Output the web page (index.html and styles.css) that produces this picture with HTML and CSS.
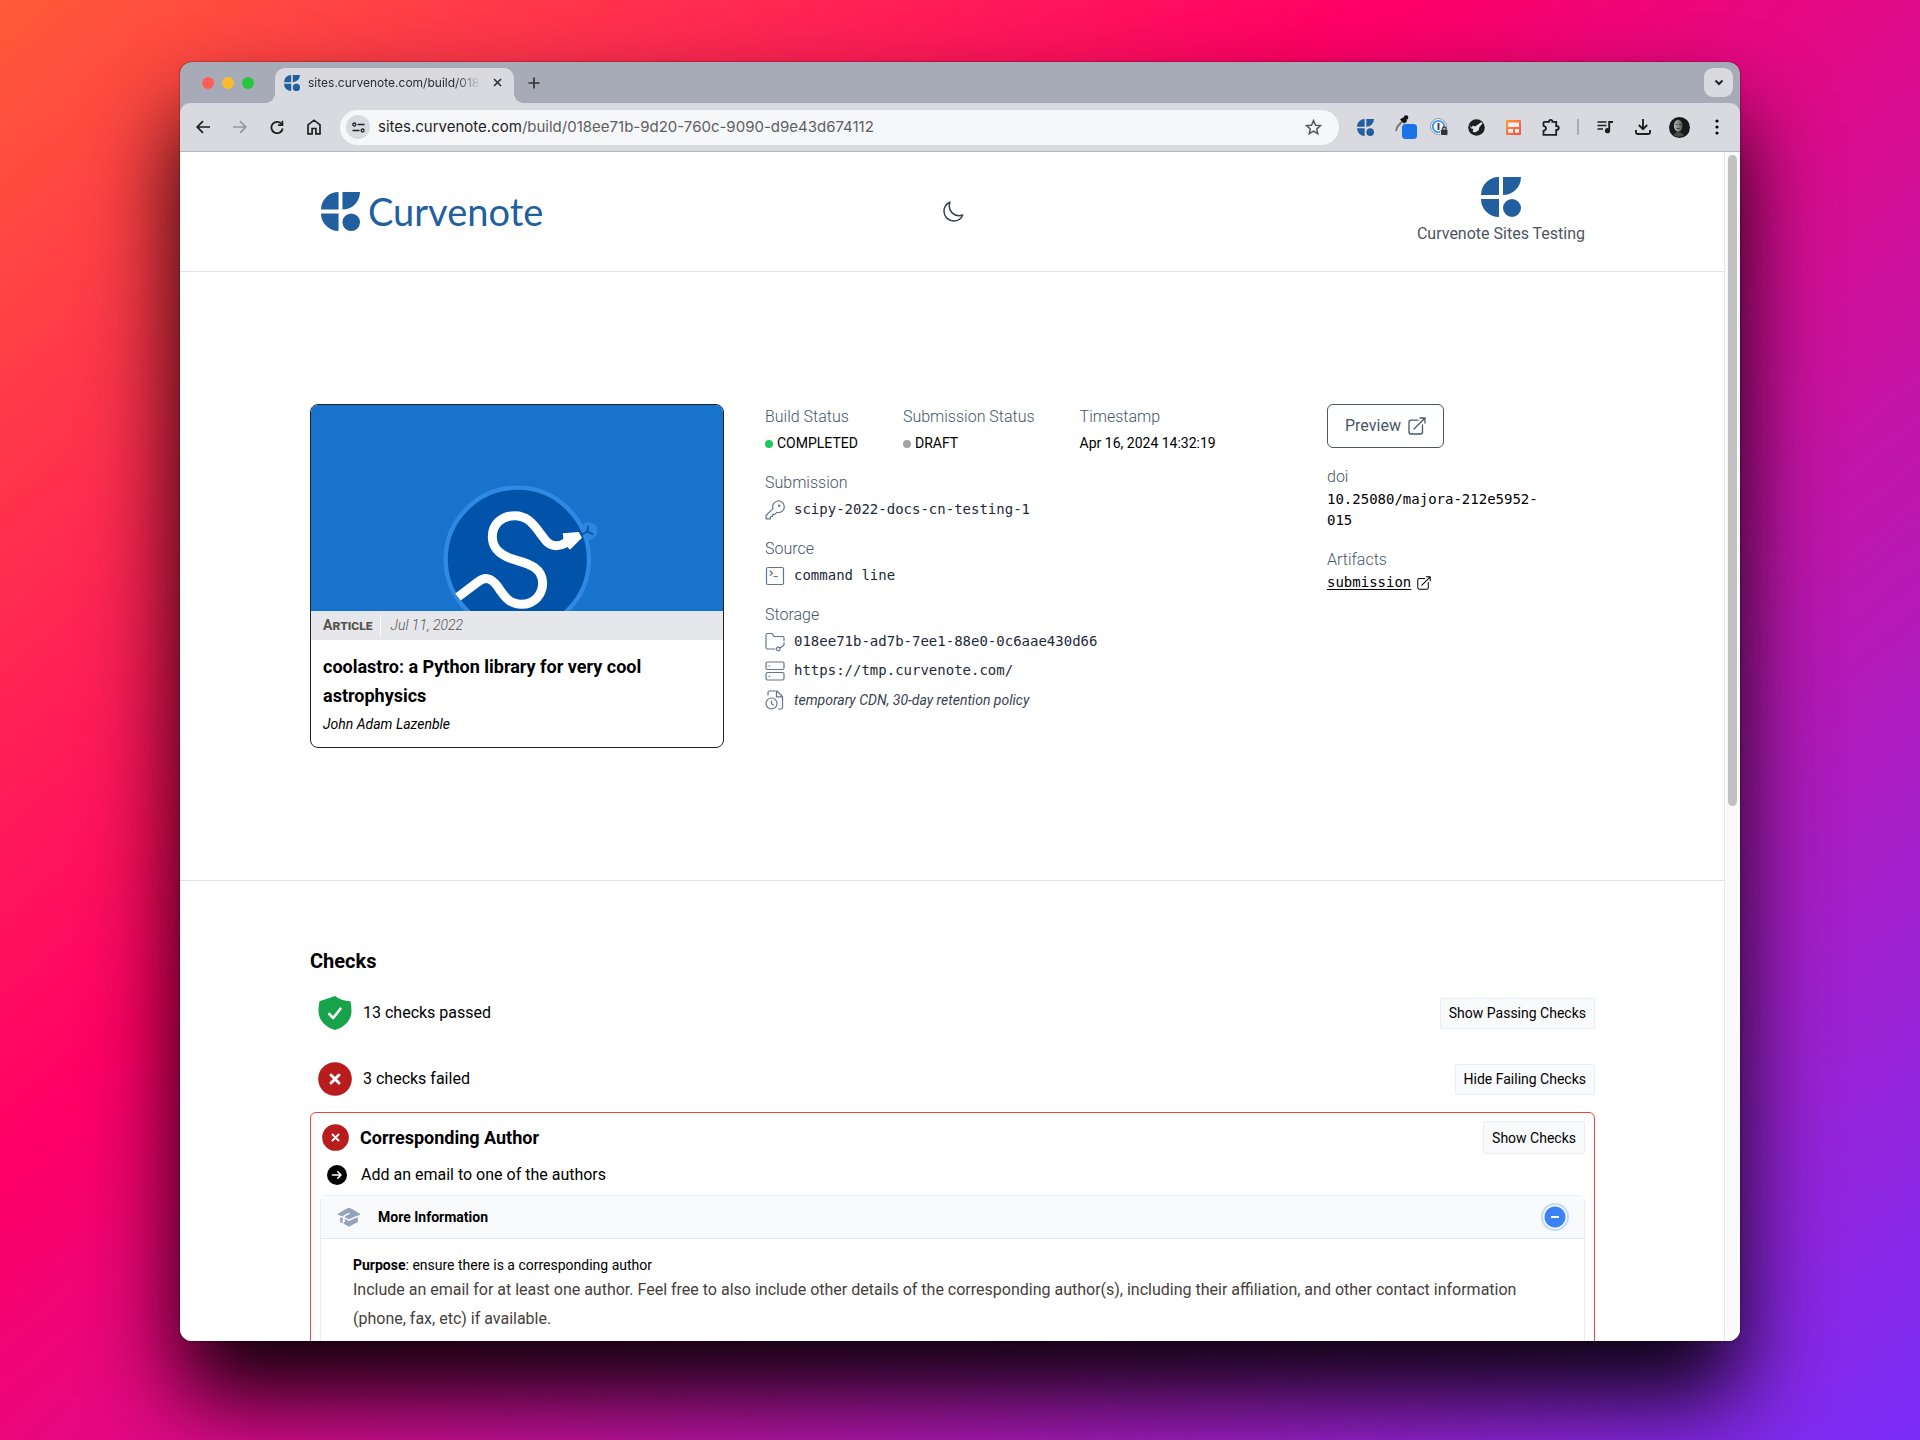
FILE: index.html
```html
<!DOCTYPE html>
<html lang="en">
<head>
<meta charset="utf-8">
<meta name="viewport" content="width=device-width, initial-scale=1">
<title>Curvenote build</title>
<link rel="stylesheet" href="styles.css">
</head>
<body>
<svg class="defs" aria-hidden="true">
  <symbol id="mark" viewBox="0 0 40 40">
    <path fill="currentColor" d="M18 0V18H0A18 18 0 0 1 18 0ZM22 0H40A18 18 0 0 1 22 18ZM0 22H18V40A18 18 0 0 1 0 22Z"/>
    <circle fill="currentColor" cx="31" cy="31" r="9"/>
  </symbol>
  <symbol id="external" viewBox="0 0 18 18">
    <path fill="none" stroke="currentColor" stroke-width="1.3" stroke-linecap="round" stroke-linejoin="round" d="M10 3.2H3A2 2 0 0 0 1 5.200V15A2 2 0 0 0 3 17H12.500A2 2 0 0 0 14.500 15V8M6 12 17 1M12 1H17V6"/>
  </symbol>
</svg>
<div class="window">
  <header class="tabs">
    <div class="lights"><span class="light close"></span><span class="light min"></span><span class="light max"></span></div>
    <div class="tab">
      <svg class="favicon"><use href="#mark"/></svg>
      <span class="tab-title">sites.curvenote.com/build/018</span>
      <button class="bare" aria-label="Close tab"><svg width="9" height="9" viewBox="0 0 9 9"><path d="M1 1 8 8M8 1 1 8" stroke="#333" stroke-width="1.700"/></svg></button>
    </div>
    <button class="bare new-tab" aria-label="New tab"><svg width="12" height="12" viewBox="0 0 12 12"><path d="M6 .5V11.500M.5 6H11.500" stroke="#333" stroke-width="1.700"/></svg></button>
    <button class="tab-search" aria-label="Search tabs"><svg width="10" height="7" viewBox="0 0 10 7"><path d="M1.500 1.500 5 5 8.500 1.500" fill="none" stroke="#222" stroke-width="2"/></svg></button>
  </header>
  <nav class="toolbar" aria-label="Browser">
    <button class="tool" aria-label="Back"><svg width="14" height="14" viewBox="0 0 14 14"><path d="M14 7H1.500M7 1.200 1.200 7 7 12.800" fill="none" stroke="#1f1f1f" stroke-width="1.700"/></svg></button>
    <button class="tool" aria-label="Forward"><svg width="14" height="14" viewBox="0 0 14 14"><path d="M0 7H12.500M7 1.200 12.800 7 7 12.800" fill="none" stroke="#96979c" stroke-width="1.700"/></svg></button>
    <button class="tool" aria-label="Reload"><svg width="14" height="14" viewBox="0 0 14 14"><path d="M12 4.600A5.700 5.700 0 1 0 12.700 8.500" fill="none" stroke="#1f1f1f" stroke-width="1.800"/><path d="M13.300.8V6H8.100V4.300H11.600V.8Z" fill="#1f1f1f"/></svg></button>
    <button class="tool" aria-label="Home"><svg width="14" height="16" viewBox="0 0 14 16"><path d="M1 5.800 7 1.200 13 5.800V14.800H8.900V9.500H5.100V14.800H1Z" fill="none" stroke="#1f1f1f" stroke-width="1.700"/></svg></button>
    <div class="address">
      <button class="tune" aria-label="Site information"><svg width="13" height="11" viewBox="0 0 13 11"><path d="M5.500 2.500H12.500M.5 8.500H7.500" stroke="#222" stroke-width="1.600"/><circle cx="2.300" cy="2.500" r="1.500" fill="none" stroke="#222" stroke-width="1.300"/><circle cx="10.600" cy="8.500" r="1.500" fill="none" stroke="#222" stroke-width="1.300"/></svg></button>
      <span class="url">sites.curvenote.com<span class="path">/build/018ee71b-9d20-760c-9090-d9e43d674112</span></span>
      <button class="bare" aria-label="Bookmark"><svg width="17" height="16" viewBox="0 0 17 16"><path d="M8.500 1.600 10.500 6.200 15.400 6.600 11.700 9.900 12.800 14.700 8.500 12.200 4.200 14.700 5.300 9.900 1.600 6.600 6.500 6.200Z" fill="none" stroke="#55565a" stroke-width="1.500"/></svg></button>
    </div>
    <button class="tool blue" aria-label="Curvenote"><svg width="17" height="17"><use href="#mark"/></svg></button>
    <button class="tool" aria-label="Colour picker"><svg width="28" height="24" viewBox="-6 0 28 24"><path d="M1 16 2.500 11.500 8 5.500" fill="none" stroke="#6b7f6b" stroke-width="2"/><path d="M5 4.500 8 2.500 12 5 11.500 7 9 8.500Z" fill="#111"/><circle cx="11" cy="2.500" r="2.300" fill="#111"/><rect x="7" y="9" width="15" height="15" rx="3.500" fill="#1a73e8"/></svg></button>
    <button class="tool" aria-label="Passwords"><svg width="19" height="18" viewBox="0 0 19 18"><circle cx="8.500" cy="8.500" r="8" fill="#f4f6f8" stroke="#7f848c" stroke-width=".8"/><circle cx="8.500" cy="8.500" r="5.700" fill="none" stroke="#3b94f5" stroke-width="1.800"/><path d="M8.500 5V12" stroke="#445" stroke-width="2"/><rect x="10.500" y="11" width="7.500" height="6.500" rx="1.500" fill="#333" stroke="#d9dae0"/><path d="M12.500 11.500V10.200A1.800 1.800 0 0 1 16 10.200V11.500" fill="none" stroke="#333" stroke-width="1.200"/></svg></button>
    <button class="tool" aria-label="Privacy"><svg width="17" height="17" viewBox="0 0 17 17"><circle cx="8.500" cy="8.500" r="8.300" fill="#1e1e1e"/><path d="M1.500 6 3.500 8.500 5 6.500 7 7.500 10 5.500 13.500 3 14.500 4.500 11.500 8 10.500 11.500 7 13.500 4.500 12.500 5.500 10 3 9.500Z" fill="#e3e4e8"/></svg></button>
    <button class="tool" aria-label="Layout"><svg width="15" height="15" viewBox="0 0 15 15"><defs><linearGradient id="warm" x2="1" y2="1"><stop stop-color="#ff9a2e"/><stop offset="1" stop-color="#f0504a"/></linearGradient></defs><rect width="15" height="15" rx="1" fill="url(#warm)"/><path d="M2 2.500H13V7H2ZM2 9H7V12.800H2ZM9 9H13V12.800H9Z" fill="#f3eef0"/></svg></button>
    <button class="tool" aria-label="Extensions"><svg width="18" height="17" viewBox="0 0 18 17"><path d="M2.500 2.800H7Q7 .9 8.700 .9T10.400 2.800H14.200V7Q16.800 7 16.800 9T14.200 11V15.800H1.500V11.800Q4 11.300 4 9.300T1.500 6.800V3.800Q1.500 2.800 2.500 2.800Z" fill="none" stroke="#1f1f1f" stroke-width="1.800"/></svg></button>
    <span class="divider"></span>
    <button class="tool" aria-label="Media"><svg width="17" height="14" viewBox="0 0 17 14"><path d="M.5 2H9.500M.5 5.500H9.500M.5 9H6" stroke="#1f1f1f" stroke-width="1.700"/><circle cx="10.500" cy="10.700" r="2.600" fill="#1f1f1f"/><path d="M12.200 10.500V2H16" fill="none" stroke="#1f1f1f" stroke-width="1.900"/></svg></button>
    <button class="tool" aria-label="Downloads"><svg width="16" height="16" viewBox="0 0 16 16"><path d="M8 0V10M3.800 6 8 10.200 12.200 6M1 11V13.500Q1 15 2.500 15H13.500Q15 15 15 13.500V11" fill="none" stroke="#1f1f1f" stroke-width="1.900"/></svg></button>
    <button class="tool" aria-label="Profile"><svg width="21" height="21" viewBox="0 0 21 21"><defs><linearGradient id="face"><stop stop-color="#bbb"/><stop offset="1" stop-color="#555"/></linearGradient></defs><circle cx="10.500" cy="10.500" r="10.500" fill="#191919"/><ellipse cx="9.200" cy="8.800" rx="4.300" ry="6" fill="url(#face)"/><path d="M4 18Q9 12 15 18 10 21.500 4 18Z" fill="#4a4a4a"/><path d="M6.500 7.500H8.500M10 7.500H12M7.500 11.500H11" stroke="#444"/></svg></button>
    <button class="tool" aria-label="Menu"><svg width="4" height="16" viewBox="0 0 4 16"><circle cx="2" cy="2" r="1.600"/><circle cx="2" cy="8" r="1.600"/><circle cx="2" cy="14" r="1.600"/></svg></button>
  </nav>

  <div class="viewport">
    <main class="page">
      <header class="site-header">
        <a class="logo" href="#"><svg width="39" height="39"><use href="#mark"/></svg><span>Curvenote</span></a>
        <button class="bare" aria-label="Dark mode"><svg width="24" height="24" viewBox="0 0 24 24"><path d="M21.752 15.002A9.720 9.720 0 0 1 18 15.750c-5.385 0-9.750-4.365-9.750-9.750 0-1.330.266-2.597.748-3.752A9.753 9.753 0 0 0 3 11.250C3 16.635 7.365 21 12.750 21a9.753 9.753 0 0 0 9.002-5.998Z" fill="none" stroke="#334155" stroke-width="1.500" stroke-linejoin="round"/></svg></button>
        <a class="site" href="#"><svg width="40" height="40"><use href="#mark"/></svg><span>Curvenote Sites Testing</span></a>
      </header>

      <section class="build">
        <article class="card">
          <svg class="cover" viewBox="0 0 412 206">
            <rect width="412" height="206" fill="#1873cd"/>
            <g transform="translate(-11 -15) scale(.3333)">
              <circle cx="866" cy="423" r="27" fill="#2f86df"/>
              <circle cx="652" cy="508" r="215" fill="#0053a8" stroke="#3089e2" stroke-width="13"/>
              <path d="M474 621 532 577C556 558 574 564 592 588C614 622 630 643 664 643C704 643 728 612 728 580C728 536 690 522 650 511C606 499 577 480 577 440C577 402 606 377 645 377C678 377 697 398 717 425C735 449 744 467 768 467Q784 467 802 456" fill="none" stroke="#fff" stroke-width="27"/>
              <path d="M788 430 836 426 846 443 810 479 800 468 785 474 790 442Z" fill="#fff"/>
              <path d="M846 434 862 424 865 407M862 424 880 434" fill="none" stroke="#0a58ae" stroke-width="6"/>
            </g>
          </svg>
          <div class="kind"><strong>Article</strong><time>Jul 11, 2022</time></div>
          <div class="card-body"><h2>coolastro: a Python library for very cool astrophysics</h2><p>John Adam Lazenble</p></div>
        </article>

        <div class="facts">
          <div class="statuses">
            <div><h3 class="label">Build Status</h3><p class="status"><span class="dot ok"></span>COMPLETED</p></div>
            <div><h3 class="label">Submission Status</h3><p class="status"><span class="dot"></span>DRAFT</p></div>
            <div><h3 class="label">Timestamp</h3><p class="status">Apr 16, 2024 14:32:19</p></div>
          </div>
          <div>
            <h3 class="label">Submission</h3>
            <p class="value"><svg class="icon" viewBox="0 0 20 20"><path d="M1 15.500 8 8.600A5.800 5.800 0 1 1 11.800 12.300L9.800 14.300H7.500V16.500H5.500V18.800H1Z"/><circle cx="14.200" cy="5.800" r=".6"/></svg><code>scipy-2022-docs-cn-testing-1</code></p>
          </div>
          <div>
            <h3 class="label">Source</h3>
            <p class="value"><svg class="icon" viewBox="0 0 20 20"><rect x="1.500" y="1.500" width="17" height="17" rx="1.500"/><path d="M5 5 7.500 7.200 5 9.400M9 10.500H12.500"/></svg><code>command line</code></p>
          </div>
          <div>
            <h3 class="label">Storage</h3>
            <p class="value"><svg class="icon" viewBox="0 0 20 20"><path d="M10 17H2.500Q1 17 1 15.500V3Q1 1.500 2.500 1.500H7L9 4.500H17.500Q19 4.500 19 6V8.500"/><path d="M19 10.500V13L14.800 16.300M11.500 17A1.800 1.800 0 1 1 15.100 17 1.800 1.800 0 0 1 11.500 17Z"/></svg><code>018ee71b-ad7b-7ee1-88e0-0c6aae430d66</code></p>
            <p class="value"><svg class="icon" viewBox="0 0 20 20"><rect x="1" y="1" width="18" height="7.500" rx="1.500"/><rect x="1" y="11.500" width="18" height="7.500" rx="1.500"/><path d="M4 4.800H4.500M4 15.300H4.500"/></svg><code>https://tmp.curvenote.com/</code></p>
            <p class="value"><svg class="icon" viewBox="0 0 20 20"><path d="M3 5V2.500Q3 1 4.500 1H12L17.500 6.500V17.500Q17.500 19 16 19H13.500M11.500 1V6.800H17.500"/><circle cx="6.500" cy="13.500" r="5.500"/><path d="M6.500 11V13.800L8.500 15"/></svg><em>temporary CDN, 30-day retention policy</em></p>
          </div>
        </div>

        <aside class="side">
          <button class="preview">Preview<svg width="18" height="18"><use href="#external"/></svg></button>
          <div><h3 class="label">doi</h3><code>10.25080/majora-212e5952-015</code></div>
          <div><h3 class="label">Artifacts</h3><a class="artifact" href="#"><code>submission</code><svg width="14" height="14"><use href="#external"/></svg></a></div>
        </aside>
      </section>

      <section class="checks">
        <h2>Checks</h2>
        <div class="summary">
          <svg width="34" height="34" viewBox="0 0 34 34"><path d="M17 0Q23 4.700 32.500 5.300 33.500 11 33.500 15C33.500 24.500 26 31.500 17 34 8 31.500.5 24.500.5 15 .5 11 1.500 5.300 1.500 5.300 11 4.700 17 0Z" fill="#16a34a"/><path d="M11.200 18 15.200 22 22.500 12.700" fill="none" stroke="#fff" stroke-width="2.600" stroke-linecap="round" stroke-linejoin="round"/></svg>
          <span>13 checks passed</span><button class="toggle">Show Passing Checks</button>
        </div>
        <div class="summary">
          <svg width="34" height="34" viewBox="0 0 34 34"><circle cx="17" cy="17" r="16.800" fill="#b91c1c"/><path d="M13 13 21 21M21 13 13 21" stroke="#fff" stroke-width="3" stroke-linecap="round"/></svg>
          <span>3 checks failed</span><button class="toggle">Hide Failing Checks</button>
        </div>
        <article class="failure">
          <header class="failure-head">
            <svg width="27" height="27" viewBox="0 0 34 34"><circle cx="17" cy="17" r="16.800" fill="#b91c1c"/><path d="M13.200 13.200 20.800 20.800M20.800 13.200 13.200 20.800" stroke="#fff" stroke-width="2.400" stroke-linecap="round"/></svg>
            <h3>Corresponding Author</h3><button class="toggle tall">Show Checks</button>
          </header>
          <p class="advice"><svg width="20" height="20" viewBox="0 0 20 20"><circle cx="10" cy="10" r="10"/><path d="M5.500 10H14M10.800 6.800 14 10 10.800 13.200" fill="none" stroke="#fff" stroke-width="1.600" stroke-linecap="round" stroke-linejoin="round"/></svg>Add an email to one of the authors</p>
          <div class="info">
            <header class="info-head">
              <svg width="24" height="24" viewBox="0 0 24 24" fill="#94a3b8"><path d="M11.700 2.805a.75.75 0 0 1 .6 0A60.650 60.650 0 0 1 22.830 8.720a.75.75 0 0 1-.231 1.337 49.948 49.948 0 0 0-9.902 3.912l-.003.002-.340.180a.75.75 0 0 1-.707 0A50.880 50.880 0 0 0 7.500 12.173v-.224c0-.131.067-.248.172-.311a54.615 54.615 0 0 1 4.653-2.520.75.75 0 0 0-.650-1.352 56.123 56.123 0 0 0-4.780 2.589 1.858 1.858 0 0 0-.859 1.228 49.803 49.803 0 0 0-4.634-1.527.75.75 0 0 1-.231-1.337A60.653 60.653 0 0 1 11.700 2.805Z"/><path d="M13.060 15.473a48.450 48.450 0 0 1 7.666-3.282c.134 1.414.220 2.843.255 4.284a.75.75 0 0 1-.460.710 47.870 47.870 0 0 0-8.105 4.342.75.75 0 0 1-.832 0 47.870 47.870 0 0 0-8.104-4.342.75.75 0 0 1-.461-.710c.035-1.442.121-2.870.255-4.286.921.304 1.830.634 2.726.990v1.270a1.500 1.500 0 0 0-.140 2.508c-.090.380-.222.753-.397 1.110.452.213.901.434 1.346.660a6.727 6.727 0 0 0 .551-1.607 1.500 1.500 0 0 0 .140-2.670v-.645a48.549 48.549 0 0 1 3.440 1.667 2.250 2.250 0 0 0 2.120 0Z"/></svg>
              <h4>More Information</h4>
              <button class="collapse" aria-label="Collapse"></button>
            </header>
            <div class="info-body">
              <p class="purpose"><strong>Purpose</strong>: ensure there is a corresponding author</p>
              <p class="detail">Include an email for at least one author. Feel free to also include other details of the corresponding author(s), including their affiliation, and other contact information (phone, fax, etc) if available.</p>
            </div>
          </div>
        </article>
      </section>
    </main>
    <div class="scrollbar"><div class="thumb"></div></div>
  </div>
</div>
</body>
</html>
```
FILE: styles.css
```css
* { box-sizing: border-box; }

body {
  margin: 0;
  height: 100vh;
  padding: 62px 180px 99px;
  display: flex;
  background: linear-gradient(140deg, #ff5a38 0%, #ff0066 38%, #7a2df8 100%);
  font: 16px/24px Roboto, sans-serif;
  color: #000;
}
h2, h3, h4, p { margin: 0; }
button { font: inherit; color: inherit; }
a { color: inherit; text-decoration: none; }
svg { display: block; flex: none; }
code { font: 14px/21px "DejaVu Sans Mono", monospace; }
.defs { position: absolute; width: 0; height: 0; }
.bare { border: 0; padding: 0; background: none; display: grid; place-items: center; }

.window {
  flex: 1;
  min-width: 0;
  display: flex;
  flex-direction: column;
  border-radius: 12px;
  overflow: hidden;
  background: #a7abb7;
  box-shadow: 0 0 2px rgba(0, 0, 0, .6), 0 56px 90px rgba(0, 0, 0, .95);
}

/* Browser chrome */
.tabs { display: flex; height: 41px; padding: 6px 7px 0 22px; font: 12px/16px Inter, sans-serif; }
.lights { display: flex; gap: 8px; padding-top: 9px; margin-right: 21px; }
.light { width: 12px; height: 12px; border-radius: 50%; }
.close { background: #ff5d55; }
.min { background: #febb2e; }
.max { background: #27c840; }
.tab {
  position: relative;
  width: 239px;
  display: flex;
  align-items: center;
  padding: 0 12px 6px 9px;
  border-radius: 10px 10px 0 0;
  background: #d9dae0;
}
.tab::before, .tab::after {
  content: "";
  position: absolute;
  bottom: 0;
  width: 10px;
  height: 10px;
}
.tab::before { left: -10px; background: radial-gradient(circle at 0 0, transparent 10px, #d9dae0 10px); }
.tab::after { right: -10px; background: radial-gradient(circle at 100% 0, transparent 10px, #d9dae0 10px); }
.favicon { width: 16px; height: 16px; color: #225f9f; margin-right: 8px; }
.tab-title {
  flex: 1;
  white-space: nowrap;
  color: #2b2c30;
  margin-right: 12px;
  -webkit-mask-image: linear-gradient(90deg, #000 85%, transparent);
  mask-image: linear-gradient(90deg, #000 85%, transparent);
}
.new-tab { width: 40px; height: 29px; }
.tab-search {
  margin-left: auto;
  width: 29px;
  height: 29px;
  padding: 0;
  border: 0;
  border-radius: 9px;
  background: #d9dae0;
  display: grid;
  place-items: center;
}
.toolbar {
  display: flex;
  align-items: center;
  height: 49px;
  padding: 0 5px 0 4px;
  border-bottom: 1px solid #b5b6be;
  border-radius: 10px 10px 0 0;
  background: #d9dae0;
}
.tool { width: 37px; height: 37px; padding: 0; border: 0; background: none; display: grid; place-items: center; flex: none; }
.blue { color: #225f9f; }
.address {
  flex: 1;
  min-width: 0;
  display: flex;
  align-items: center;
  height: 35px;
  margin: 0 8px;
  padding: 0 17px 0 6px;
  border-radius: 18px;
  background: #f6f7f9;
}
.tune { width: 24px; height: 24px; padding: 0; border: 0; border-radius: 50%; background: #d9dae0; display: grid; place-items: center; }
.url { flex: 1; margin-left: 8px; font: 15px/20px Inter, sans-serif; color: #1f1f1f; }
.path { color: #5d5e62; }
.divider { width: 2px; height: 16px; margin: 0 8px; background: #a7abb7; }

.viewport { flex: 1; min-height: 0; display: flex; background: #fff; }
.page { flex: 1; min-width: 0; overflow: hidden; }
.scrollbar { width: 16px; padding: 3px; border-left: 1px solid #e8e8e8; background: #fafafa; }
.thumb { width: 9px; height: 55%; border-radius: 5px; background: #c1c1c1; }

/* Site header */
.site-header {
  display: grid;
  grid-template-columns: 1fr auto 1fr;
  align-items: center;
  padding: 25px 139px 25px 141px;
  border-bottom: 1px solid #dfe2e8;
}
.logo { display: flex; align-items: center; gap: 8px; color: #225f9f; font: 38px/39px Lato, sans-serif; }
.site { justify-self: end; display: flex; flex-direction: column; align-items: center; gap: 5px; color: #4b5563; }
.site svg { color: #225f9f; }

/* Build summary */
.build {
  display: grid;
  grid-template-columns: 414fr 521fr 268fr;
  gap: 41px;
  align-items: start;
  padding: 132px 129px 132px 130px;
  border-bottom: 1px solid #dfe0e3;
}
.card { border: 1px solid #222; border-radius: 8px; overflow: hidden; }
.cover { width: 100%; aspect-ratio: 2; }
.kind { display: flex; align-items: center; padding: 4px 12px; background: #e5e7eb; font-size: 14px; line-height: 21px; color: #57534e; }
.kind strong { font-variant: small-caps; padding-right: 8px; border-right: 1px solid #fff; }
.kind time { padding-left: 9px; font-style: italic; font-weight: 300; }
.card-body { padding: 12px 12px 8px; }
.card-body h2 { font-size: 18px; line-height: 29px; }
.card-body p { font-size: 14px; line-height: 29px; font-style: italic; }

.facts { display: grid; gap: 12px; }
.statuses { display: flex; gap: 45px; }
.label { font-size: 16px; line-height: 25px; font-weight: 300; color: #475569; white-space: nowrap; }
.status { display: flex; align-items: center; gap: 4px; font-size: 14px; line-height: 29px; white-space: nowrap; }
.dot { width: 8px; height: 8px; border-radius: 50%; background: #a3a3a3; }
.ok { background: #22c55e; }
.value { display: flex; align-items: center; gap: 9px; height: 29px; color: #1e293b; }
.value em { font-size: 14px; color: #374151; }
.icon { width: 20px; height: 20px; fill: none; stroke: #64748b; stroke-width: 1.2; stroke-linejoin: round; stroke-linecap: round; }

.side { display: grid; justify-items: start; gap: 16px; padding-right: 48px; }
.side code { display: block; }
.preview {
  display: flex;
  align-items: center;
  gap: 7px;
  height: 44px;
  padding: 0 17px;
  border: 1px solid #4b5563;
  border-radius: 6px;
  background: #fff;
  color: #475569;
}
.artifact { display: flex; align-items: center; gap: 6px; text-decoration: underline; text-underline-offset: 2px; }

/* Checks */
.checks { padding: 66px 129px 66px 130px; }
.checks h2 { font-size: 20px; line-height: 29px; margin-bottom: 4px; }
.summary { display: flex; align-items: center; gap: 11px; height: 66px; padding-left: 8px; }
.toggle {
  margin-left: auto;
  height: 31px;
  padding: 0 8px;
  border: 1px solid #e9edf3;
  border-radius: 2px;
  background: #f8fafc;
  font-size: 14px;
}
.tall { height: 33px; }
.failure { border: 1px solid #ef4444; border-radius: 6px; padding: 8px 9px; }
.failure-head { display: flex; align-items: center; gap: 11px; padding-left: 2px; }
.failure-head h3 { font-size: 18px; line-height: 29px; }
.advice { display: flex; align-items: center; gap: 14px; line-height: 29px; margin: 6px 0; padding-left: 7px; }
.info { border: 1px solid #e9edf3; border-radius: 6px 6px 0 0; }
.info-head { display: flex; align-items: center; height: 43px; padding: 0 15px 0 16px; border-bottom: 1px solid #e2e8f0; background: #f8fafc; }
.info-head h4 { margin-left: 17px; font-size: 14px; }
.collapse {
  margin-left: auto;
  width: 28px;
  height: 28px;
  padding: 0;
  border: 2px solid #bfdbfe;
  border-radius: 50%;
  background: linear-gradient(#fff, #fff) center / 8px 2px no-repeat, radial-gradient(#3b82f6 10px, #fff 11px);
}
.info-body { padding: 16px 32px; }
.purpose { font-size: 14px; line-height: 20px; }
.detail { line-height: 29px; color: #44403c; }
```
